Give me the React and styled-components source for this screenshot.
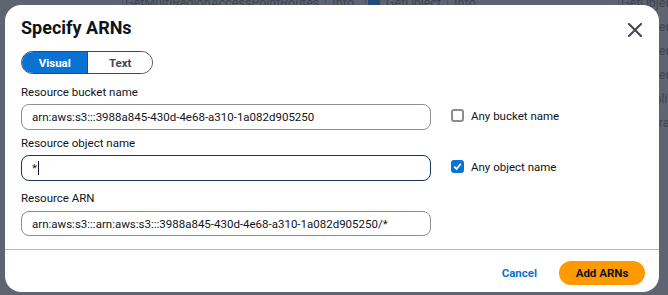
import styled, { createGlobalStyle } from "styled-components";

const Global = createGlobalStyle`
  html, body {
    margin: 0;
    padding: 0;
    background: #5e6470;
    font-family: Roboto, "Liberation Sans", sans-serif;
    overflow: hidden;
  }
`;

export default function App() {
    return (
        <Screen>
            <Global />
            <Backdrop>
                <BgColumn $width={120} />
                <BgColumn $width={240}>
                    <BgRow>GetMultiRegionAccessPointRoutes <BgSep>Info</BgSep></BgRow>
                </BgColumn>
                <BgColumn $width={250}>
                    <BgRow><BgBox />GetObject <BgSep>Info</BgSep></BgRow>
                </BgColumn>
                <BgColumn $width={120}>
                    <BgRow>GetObjectAcl</BgRow>
                    <BgRow>GetObjectRetention</BgRow>
                    <BgRow>GetObjectVersion</BgRow>
                    <BgRow>GetObjectVersionAcl</BgRow>
                    <BgRow>GetReplicationConfig</BgRow>
                    <BgRow>GetStorageLens</BgRow>
                </BgColumn>
            </Backdrop>

            <Modal>
                <Header>
                    <Title>Specify ARNs</Title>
                    <CloseButton aria-label="Close">
                        <svg width="14" height="14" viewBox="0 0 14 14">
                            <path d="M1 1 L13 13 M13 1 L1 13" stroke="#424650" strokeWidth="2" strokeLinecap="square" />
                        </svg>
                    </CloseButton>
                </Header>

                <Segmented>
                    <Segment $active>Visual</Segment>
                    <Segment>Text</Segment>
                </Segmented>

                <Form>
                    <Field $top={10}>
                        <Label>Resource bucket name</Label>
                        <InputRow>
                            <Input>arn:aws:s3:::3988a845-430d-4e68-a310-1a082d905250</Input>
                            <Check>
                                <Box />
                                Any bucket name
                            </Check>
                        </InputRow>
                    </Field>
                    <Field $top={5}>
                        <Label>Resource object name</Label>
                        <InputRow>
                            <Input $focused>*<Caret /></Input>
                            <Check>
                                <Box $checked>
                                    <svg width="9" height="9" viewBox="0 0 9 9">
                                        <path d="M1.2 4.6 L3.6 7 L7.8 1.8" stroke="#fff" strokeWidth="1.8" fill="none" />
                                    </svg>
                                </Box>
                                Any object name
                            </Check>
                        </InputRow>
                    </Field>
                    <Field $top={9} $gap={5}>
                        <Label>Resource ARN</Label>
                        <InputRow>
                            <Input $short>arn:aws:s3:::arn:aws:s3:::3988a845-430d-4e68-a310-1a082d905250/*</Input>
                        </InputRow>
                    </Field>
                </Form>

                <Footer>
                    <LinkButton>Cancel</LinkButton>
                    <PrimaryButton>Add ARNs</PrimaryButton>
                </Footer>
            </Modal>
        </Screen>
    );
}

const Screen = styled.div`
    position: relative;
    width: 668px;
    height: 295px;
    overflow: hidden;
`;

const Backdrop = styled.div`
    display: flex;
    margin-top: -6px;
    color: #3e444d;
    font-size: 12.5px;
`;

const BgColumn = styled.div`
    width: ${p => p.$width}px;
    flex-shrink: 0;
    display: flex;
    flex-direction: column;
    gap: 8px;
    border-right: 1px solid #4f555f;
    padding-left: 2px;
`;

const BgRow = styled.div`
    display: flex;
    align-items: center;
    gap: 6px;
    height: 16px;
    white-space: nowrap;
`;

const BgSep = styled.span`
    border-left: 1px solid #4f555f;
    padding-left: 6px;
`;

const BgBox = styled.span`
    width: 12px;
    height: 12px;
    border-radius: 3px;
    background: #23497a;
`;

const Modal = styled.div`
    position: absolute;
    left: 5px;
    top: 5px;
    width: 654px;
    height: 287px;
    box-sizing: border-box;
    background: #ffffff;
    border-radius: 16px;
    display: flex;
    flex-direction: column;
    color: #0f141a;
`;

const Header = styled.div`
    display: flex;
    justify-content: space-between;
    align-items: center;
    padding: 13px 16px 0 16px;
    height: 20px;
`;

const Title = styled.h2`
    margin: 0;
    font-size: 18px;
    line-height: 20px;
    font-weight: 700;
`;

const CloseButton = styled.button`
    border: none;
    background: none;
    padding: 0;
    margin-right: 1px;
    margin-top: 3px;
    display: flex;
`;

const Segmented = styled.div`
    display: flex;
    margin: 13px 0 0 16px;
    width: 132px;
    height: 23px;
    box-sizing: border-box;
    border: 1px solid #424650;
    border-radius: 12px;
    overflow: hidden;
`;

const Segment = styled.div`
    flex: 1 1 ${p => (p.$active ? 67 : 65)}px;
    display: flex;
    align-items: center;
    justify-content: center;
    font-size: 11.5px;
    font-weight: 700;
    background: ${p => (p.$active ? "#0972d3" : "#ffffff")};
    color: ${p => (p.$active ? "#ffffff" : "#424650")};
    border-left: ${p => (p.$active ? "none" : "1px solid #424650")};
`;

const Form = styled.div`
    display: flex;
    flex-direction: column;
    padding: 0 16px;
    border-bottom: 1px solid #b4bcc6;
    padding-bottom: 13px;
`;

const Field = styled.div`
    display: flex;
    flex-direction: column;
    gap: ${p => p.$gap ?? 4}px;
    margin-top: ${p => p.$top}px;
`;

const Label = styled.div`
    font-size: 11.5px;
    line-height: 16px;
    color: #0f141a;
`;

const InputRow = styled.div`
    display: flex;
    align-items: center;
    gap: 20px;
`;

const Input = styled.div`
    width: 410px;
    height: ${p => (p.$short ? 25 : 26)}px;
    box-sizing: border-box;
    border: 1px solid ${p => (p.$focused ? "#16365a" : "#8c8c94")};
    border-radius: 8px;
    padding: 0 10px;
    display: flex;
    align-items: center;
    font-size: 11.5px;
    color: #0f141a;
    white-space: nowrap;
    overflow: hidden;
`;

const Caret = styled.span`
    width: 1px;
    height: 14px;
    background: #0f141a;
    margin-left: 1px;
`;

const Check = styled.label`
    display: flex;
    align-items: center;
    gap: 7px;
    font-size: 11.5px;
    color: #0f141a;
    margin-top: -3px;
`;

const Box = styled.span`
    width: 13px;
    height: 13px;
    box-sizing: border-box;
    border-radius: 3px;
    border: ${p => (p.$checked ? "none" : "2px solid #8c8c94")};
    background: ${p => (p.$checked ? "#0972d3" : "#ffffff")};
    display: flex;
    align-items: center;
    justify-content: center;
`;

const Footer = styled.div`
    display: flex;
    justify-content: flex-end;
    align-items: center;
    gap: 14px;
    padding: 11px 14px 0 0;
`;

const LinkButton = styled.button`
    border: none;
    background: none;
    padding: 0 8px;
    font-family: inherit;
    font-size: 11.5px;
    font-weight: 700;
    color: #0972d3;
`;

const PrimaryButton = styled.button`
    border: none;
    background: #ff9900;
    color: #0f141a;
    border-radius: 12px;
    width: 86px;
    height: 24px;
    font-family: inherit;
    font-size: 11.5px;
    font-weight: 700;
`;
